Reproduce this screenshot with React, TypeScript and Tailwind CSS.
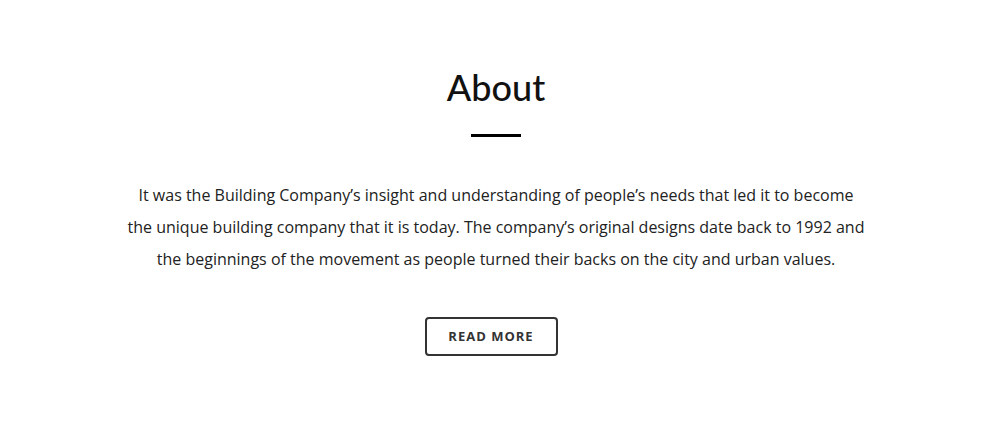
import * as React from 'react';

export default function App() {
  return (
    <div className="w-full min-h-[421px] bg-white flex flex-col items-center pt-[67px]">
      <h2 className="font-['Lato',sans-serif] text-[36px] leading-[40px] font-medium text-[#111]">
        About
      </h2>
      <div className="w-[50px] h-[3px] bg-black mt-[27px]" />
      <p className="mt-[42px] w-[740px] text-center font-['Open_Sans',sans-serif] text-[16px] leading-[32px] text-[#222]">
        It was the Building Company’s insight and understanding of people’s needs that led it to become the unique
        building company that it is today. The company’s original designs date back to 1992 and the beginnings of the
        movement as people turned their backs on the city and urban values.
      </p>
      <button className="mt-[42px] mr-[10px] w-[133px] h-[39px] border-2 border-[#333] rounded-[4px] font-['Open_Sans',sans-serif] font-bold text-[13px] tracking-[1px] text-[#333]">
        READ MORE
      </button>
    </div>
  );
}
